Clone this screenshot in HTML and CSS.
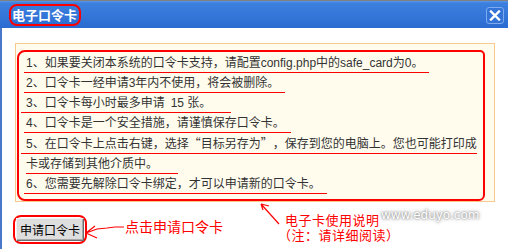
FILE: index.html
```html
<!DOCTYPE html>
<html lang="zh-CN">
<head>
  <meta charset="UTF-8">
  <meta name="viewport" content="width=device-width, initial-scale=1.0">
  <link rel="stylesheet" href="styles.css">
  <title>电子口令卡</title>
</head>
<body>

<div class="window">
  <div class="titlebar">
    <span class="title">电子口令卡</span>
    <span class="close">
      <svg width="12" height="11" viewBox="0 0 12 11">
        <path d="M2 1.5 L10 9.5 M10 1.5 L2 9.5" stroke="#fff" stroke-width="2.4" stroke-linecap="square"/>
      </svg>
    </span>
  </div>

  <div class="content">
    <div class="panel">
      <div class="notes">
        <p><span class="mark">1、如果要关闭本系统的口令卡支持，请配置config.php中的safe_card为0。</span></p>
        <p><span class="mark">2、口令卡一经申请3年内不使用，将会被删除。</span></p>
        <p><span class="mark long">3、口令卡每小时最多申请&ensp;15 张。</span></p>
        <p><span class="mark">4、口令卡是一个安全措施，请谨慎保存口令卡。</span></p>
        <p><span class="mark long">5、在口令卡上点击右键，选择<span class="ql">“</span>目标另存为<span class="qr">”</span>，保存到您的电脑上。您也可能打印成<br>卡或存储到其他介质中。</span></p>
        <p><span class="mark">6、您需要先解除口令卡绑定，才可以申请新的口令卡。</span></p>
      </div>
    </div>

    <div class="actions">
      <span class="btn-mark"><button class="btn">申请口令卡</button></span>
      <svg class="arrow-left" width="40" height="20" viewBox="0 0 40 20">
        <path d="M1 12 L10 5 M1 12 L12 17 M1 12 L12 8 L22 7 L30 6 L39 6" stroke="#f00" stroke-width="1.2" fill="none"/>
      </svg>
      <span class="hint">点击申请口令卡</span>

      <svg class="arrow-up" width="22" height="22" viewBox="0 0 22 22">
        <path d="M3 1 L21 21 M3 1 L11 3 M3 1 L5 7" stroke="#f00" stroke-width="1.2" fill="none"/>
      </svg>
      <div class="doc-note">
        <div class="doc-line first">电子卡使用说明</div>
        <div class="doc-line">（注：请详细阅读）</div>
        <span class="watermark">www.eduyo.com</span>
      </div>
    </div>
  </div>
</div>

</body>
</html>
```

FILE: styles.css
```css
body {
  margin: 0;
  font-family: "Liberation Sans", "Noto Sans CJK SC", sans-serif;
  font-size: 12px;
  color: #333;
  background: #fff;
}
.window {
  min-height: 100vh;
  border-left: 2px solid #4a78c8;
  box-sizing: border-box;
}
.titlebar {
  height: 28px;
  box-sizing: border-box;
  border-top: 1px solid #808080;
  background: linear-gradient(#5a98ec 0, #3c80de 2px, #3577d9 50%, #2b6bd1 100%);
  display: flex;
  justify-content: space-between;
  align-items: center;
  padding: 0 4px 0 9px;
  margin-left: -2px;
}
.title {
  font-family: "Noto Sans CJK SC", sans-serif;
  font-weight: bold;
  font-size: 13px;
  line-height: 18px;
  color: #fff;
  border: 2px solid #f00;
  border-radius: 8px;
  padding: 0 2px 0 1px;
}
.close {
  width: 16px;
  height: 15px;
  border: 1px solid #7eaaf0;
  border-radius: 3px;
  background: #3474d6;
  display: flex;
  align-items: center;
  justify-content: center;
  margin-top: 2px;
}
.content {
  padding: 0 13px;
}
.panel {
  margin-top: 15px;
  width: 480px;
  box-sizing: border-box;
  border: 1px solid #f9c88c;
  background: #fffcee;
}
.notes {
  margin: 6px 9px 0 1px;
  border: 2px solid #f00;
  border-radius: 8px 5px 6px 8px;
  padding: 1px 0 5px 7px;
}
.notes p {
  margin: 0;
  line-height: 20px;
  white-space: nowrap;
}
.mark {
  border-bottom: 1px solid #f00;
  padding: 0 6px 2px 2px;
  margin-left: -2px;
}
.mark.long {
  padding-right: 20px;
  margin-left: -5px;
  padding-left: 5px;
}
.ql, .qr {
  display: inline-block;
  width: 12px;
  font-family: "Noto Sans CJK SC", sans-serif;
}
.ql { text-align: right; }
.qr { text-align: left; }

.actions {
  display: flex;
  align-items: flex-start;
  margin-top: 1px;
  height: 46px;
}
.btn-mark {
  margin: 12px 0 0 -2px;
  border: 2px solid #f00;
  border-radius: 8px;
  padding: 1px;
  display: flex;
}
.btn {
  width: 68px;
  height: 23px;
  padding: 0;
  font-family: "Noto Sans CJK SC", sans-serif;
  font-size: 12px;
  color: #000;
  background: #dedede;
  border: 1px solid;
  border-color: #f2f2f2 #6c6c6c #6c6c6c #f2f2f2;
  box-shadow: inset -1px -1px 0 #a8a8a8;
}
.arrow-left {
  margin: 18px 0 0 -2px;
}
.hint {
  margin-top: 15px;
  font-family: "Noto Sans CJK SC", sans-serif;
  font-size: 14px;
  line-height: 16px;
  color: #f00;
}
.arrow-up {
  margin-left: 35px;
}
.doc-note {
  position: relative;
  margin: 10px 0 0 -2px;
  font-family: "Liberation Sans", "Noto Sans CJK SC", sans-serif;
  font-size: 13px;
  letter-spacing: 0.5px;
  line-height: 15px;
  color: #f00;
}
.doc-line.first {
  padding-left: 7px;
}
.watermark {
  position: absolute;
  left: 103px;
  top: -5px;
  font-family: "DejaVu Sans", sans-serif;
  font-size: 12px;
  letter-spacing: 0;
  line-height: 14px;
  color: #fff;
  white-space: nowrap;
  text-shadow: 0 0 2px #777, 0 0 4px #999;
}
```
